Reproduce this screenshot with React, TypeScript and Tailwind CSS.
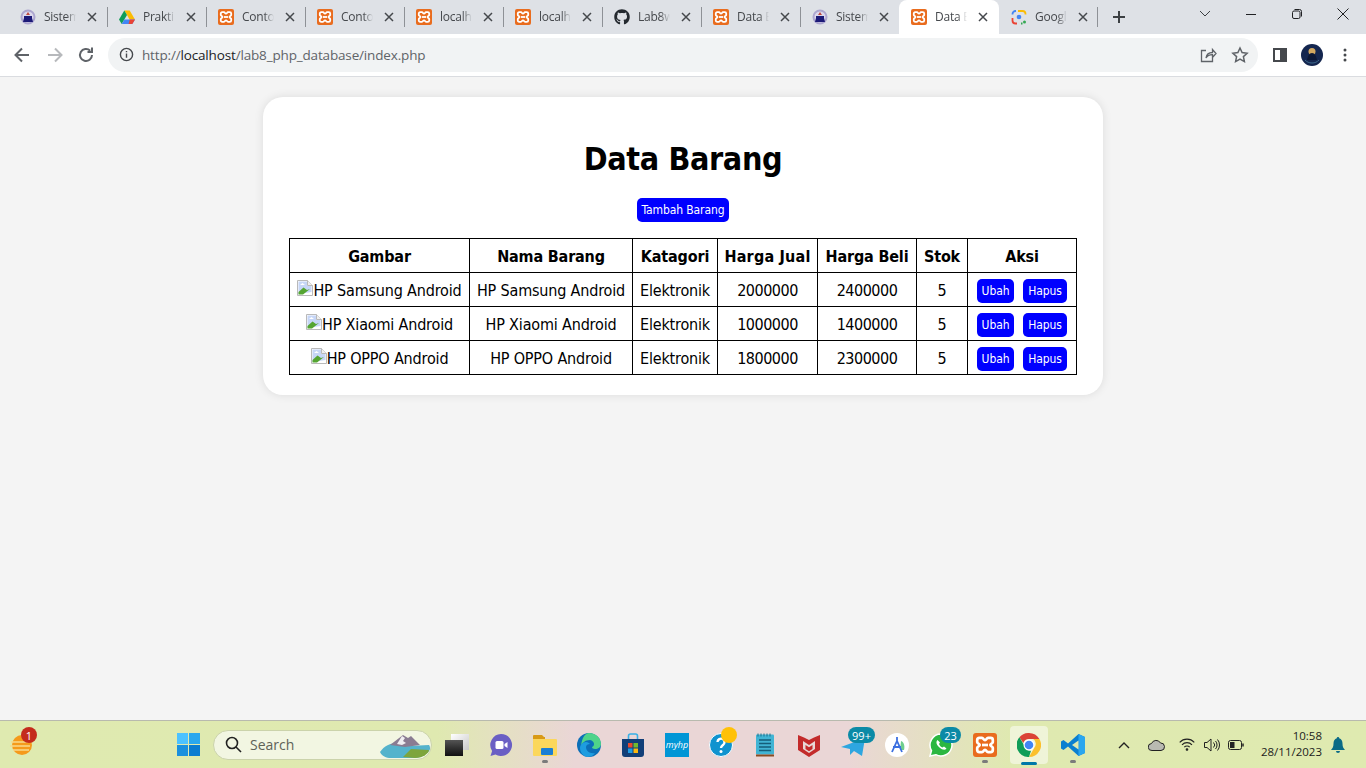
import React from "react";
import { FaGithub } from "react-icons/fa";

const Xampp = ({ s = 16 }: { s?: number }) => (
  <svg width={s} height={s} viewBox="0 0 16 16" className="shrink-0">
    <rect width="16" height="16" rx="2" fill="#e96c1e" />
    <path d="M4.200 3.200h1.800c1 0 1 1.500 2 1.500s1-1.500 2-1.500h1.800c.9 0 1.400.7 1.400 1.400v1.500c0 .9-1.700 1-1.700 1.900s1.700 1 1.700 1.900v1.500c0 .7-.5 1.400-1.400 1.400H10c-1 0-1-1.500-2-1.500s-1 1.500-2 1.500H4.200c-.9 0-1.400-.7-1.400-1.400V9.900c0-.9 1.700-1 1.700-1.900s-1.700-1-1.700-1.900V4.600c0-.7.5-1.400 1.400-1.400z" fill="none" stroke="#fff" strokeWidth="1.800" />
    <path d="M6 8h4" stroke="#fff" strokeWidth="1.800" />
  </svg>
);

const Emblem = () => (
  <svg width="16" height="16" viewBox="0 0 16 16" className="shrink-0">
    <circle cx="8" cy="8" r="7.500" fill="#aca6cf" />
    <circle cx="8" cy="8" r="5.500" fill="#dcd8ec" />
    <path d="M8 3l2 3H6z" fill="#c0493f" />
    <path d="M4 7h8v2l1 4H3l1-4z" fill="#1c1a78" />
  </svg>
);

const Drive = () => (
  <svg width="16" height="16" viewBox="0 0 16 16" className="shrink-0">
    <path d="M5.300 1.500h5.400L16 10.500h-5.400z" fill="#fbbc04" />
    <path d="M5.300 1.500L0 10.500l2.700 4.500L8 6z" fill="#0f9d58" />
    <path d="M2.700 15h10.600L16 10.500H5.400z" fill="#4285f4" />
    <path d="M13.300 15L16 10.500h-5.200l-1.300 4.500z" fill="#ea4335" />
  </svg>
);

const Lens = () => (
  <svg width="16" height="16" viewBox="0 0 16 16" className="shrink-0" fill="none" strokeWidth="1.800">
    <path d="M5 2H4.500A3 3 0 0 0 1.500 5v.5" stroke="#4285f4" />
    <path d="M1.500 9v2.500a3 3 0 0 0 3 3H6" stroke="#ea4335" />
    <path d="M10 14.500h1.500" stroke="#34a853" />
    <path d="M7 2h4.500a3 3 0 0 1 3 3v.5" stroke="#fbbc04" />
    <circle cx="8" cy="8" r="2.300" fill="#4285f4" stroke="none" />
    <circle cx="13.500" cy="13" r="1.500" fill="#34a853" stroke="none" />
  </svg>
);

const tabs: { icon: React.ReactNode; title: string; active?: boolean }[] = [
  { icon: <Emblem />, title: "Sistem" },
  { icon: <Drive />, title: "Praktikum" },
  { icon: <Xampp />, title: "Contoh" },
  { icon: <Xampp />, title: "Contoh" },
  { icon: <Xampp />, title: "localhost" },
  { icon: <Xampp />, title: "localhost" },
  { icon: <FaGithub className="shrink-0 text-[16px] text-[#24292f]" />, title: "Lab8web" },
  { icon: <Xampp />, title: "Data Barang" },
  { icon: <Emblem />, title: "Sistem" },
  { icon: <Xampp />, title: "Data Barang", active: true },
  { icon: <Lens />, title: "Google" },
];

const Tab = ({ icon, title, active, sep, last }: { icon: React.ReactNode; title: string; active?: boolean; sep: boolean; last: boolean }) => (
  <div className={active ? "relative flex h-[34px] w-[100px] shrink-0 items-center rounded-t-[8px] bg-white pl-[12px]" : last ? "relative flex h-[34px] w-[98px] shrink-0 items-center pl-[12px]" : "relative flex h-[34px] w-[99px] shrink-0 items-center pl-[12px]"}>
    {icon}
    <span className="ml-[8px] w-[32px] overflow-hidden whitespace-nowrap text-[12px] tracking-[-0.25px] text-[#45484c] [mask-image:linear-gradient(to_right,black_70%,transparent)]">
      {title}
    </span>
    <svg width="10" height="10" viewBox="0 0 10 10" className="ml-[11px] shrink-0" stroke="#45484c" strokeWidth="1.500">
      <path d="M1 1l8 8M9 1l-8 8" />
    </svg>
    {sep && <div className="absolute right-[-1px] top-[7px] h-[20px] w-px bg-[#8e9196]" />}
  </div>
);

const ToolBtn = ({ d, c = "#5f6368" }: { d: string; c?: string }) => (
  <svg viewBox="0 0 20 20" className="h-[20px] w-[20px]" fill="none" stroke={c} strokeWidth="2">
    <path d={d} />
  </svg>
);

const rows = [
  ["HP Samsung Android", "2000000", "2400000"],
  ["HP Xiaomi Android", "1000000", "1400000"],
  ["HP OPPO Android", "1800000", "2300000"],
];

const Broken = () => (
  <svg width="16" height="16" viewBox="0 0 16 16" className="inline-block align-[0px]">
    <path d="M.5.500h10l5 5v10H.5z" fill="#fff" stroke="#b9b9b9" />
    <path d="M1.500 1.500h8.500v4.500h4.500v6L1.500 14z" fill="#c6d6f7" />
    <path d="M1.500 14.500V12L6.500 7.500l3.500 2.500 3-1-7 5.500z" fill="#55a532" />
    <path d="M3 5l2.500-2 2.500 2z" fill="#fff" />
    <path d="M10.500.500v5h5" fill="#efefef" stroke="#b9b9b9" />
  </svg>
);

const Btn = ({ children, w }: { children: string; w: string }) => (
  <span className={`inline-flex h-[24px] ${w} items-center justify-center rounded-[5px] bg-[#0000ff] text-[12px] leading-none tracking-[-0.1px] text-white`}>{children}</span>
);

const Slot = ({ children, dot }: { children: React.ReactNode; dot?: boolean }) => (
  <div className="relative flex h-[47px] w-[44px] shrink-0 items-center justify-center">
    {children}
    {dot && <div className="absolute bottom-[5px] left-[19px] h-[3px] w-[6px] rounded-full bg-[#7b7b7b]" />}
  </div>
);

const Pill = ({ children, cls }: { children: string; cls: string }) => (
  <div className={`absolute flex h-[16px] items-center justify-center rounded-full bg-[#0b8aa6] text-[11px] leading-none text-white ${cls}`}>{children}</div>
);

const td = "border border-black p-0 pt-[2px]";

export default function App() {
  return (
    <div className="flex h-screen w-full flex-col overflow-hidden bg-[#f4f4f4] font-['Open_Sans',sans-serif]">
      {/* tab strip */}
      <div className="flex h-[34px] shrink-0 items-center bg-[#dee1e6] pl-[8px]">
        {tabs.map((t, i) => (
          <Tab key={i} icon={t.icon} title={t.title} active={t.active} last={i === 10} sep={!t.active && i !== 8} />
        ))}
        <svg width="14" height="14" viewBox="0 0 14 14" className="ml-[15px] shrink-0" stroke="#3c4043" strokeWidth="2">
          <path d="M7 1v12M1 7h12" />
        </svg>
        <svg width="12" height="8" viewBox="0 0 12 8" className="ml-[73px] mb-[6px] shrink-0" fill="none" stroke="#3c4043" strokeWidth="1">
          <path d="M1 1l5 5 5-5" />
        </svg>
        <svg width="12" height="12" viewBox="0 0 12 12" className="ml-[34px] mb-[6px] shrink-0" stroke="#202124" strokeWidth="1">
          <path d="M1 6.500h10" />
        </svg>
        <svg width="12" height="12" viewBox="0 0 12 12" className="ml-[34px] mb-[6px] shrink-0" fill="none" stroke="#202124" strokeWidth="1">
          <rect x="1.500" y="3" width="7.500" height="7.500" rx="1.500" />
          <path d="M3.500 1.500h5a2 2 0 0 1 2 2v5" />
        </svg>
        <svg width="14" height="14" viewBox="0 0 14 14" className="ml-[33px] mb-[6px] shrink-0" stroke="#202124" strokeWidth="1">
          <path d="M1.500 1.500l11 11M12.500 1.500l-11 11" />
        </svg>
      </div>

      {/* toolbar */}
      <div className="flex h-[43px] shrink-0 items-center border-b border-[#dadce0] bg-white pb-px pl-[12px]">
        <ToolBtn d="M17 10H4M10 3.500L3.500 10l6.500 6.500" />
        <div className="ml-[13px]"><ToolBtn d="M3 10h13M10 3.500l6.500 6.500-6.500 6.500" c="#b7b9bc" /></div>
        <div className="ml-[11px]"><ToolBtn d="M16 10a6 6 0 1 1-1.800-4.300M16 2.500v4.500h-4.500" c="#5f6368" /></div>
        <div className="ml-[12px] flex h-[34px] w-[1150px] shrink-0 items-center rounded-full bg-[#f1f3f4] pl-[11px]">
          <svg width="15" height="15" viewBox="0 0 16 16" fill="none" stroke="#45484c" strokeWidth="1.500" className="shrink-0">
            <circle cx="8" cy="8" r="6.500" />
            <path d="M8 7v4.500M8 4.200v1.500" />
          </svg>
          <span className="ml-[8px] mt-px whitespace-nowrap text-[13.500px] tracking-[-0.16px] text-[#5f6368]">
            http://<span className="text-[#202124]">localhost</span>/lab8_php_database/index.php
          </span>
          <svg width="18" height="18" viewBox="0 0 18 18" fill="none" stroke="#5f6368" strokeWidth="1.300" className="ml-auto shrink-0">
            <path d="M7 4.500H2.500v11h11V11M7 12c.5-3.500 3-5.500 6.500-5.500V3.500L17 7.500l-3.500 4V8.600c-3-.1-5 .9-6.500 3.400z" />
          </svg>
          <svg width="18" height="18" viewBox="0 0 18 18" fill="none" stroke="#5f6368" strokeWidth="1.500" className="ml-[14px] mr-[9px] shrink-0">
            <path d="M9 2l2.100 4.600 5 .6-3.700 3.400 1 5L9 13.100l-4.400 2.500 1-5L1.900 7.200l5-.6z" />
          </svg>
        </div>
        <div className="ml-[15px] flex h-[14px] w-[14px] shrink-0 justify-end border-2 border-[#45484c] bg-white">
          <div className="h-full w-[5px] bg-[#45484c]" />
        </div>
        <svg width="22" height="22" viewBox="0 0 22 22" className="ml-[14px] shrink-0">
          <circle cx="11" cy="11" r="11" fill="#14264f" />
          <circle cx="11" cy="7.500" r="3.500" fill="#d2a860" />
          <path d="M11 9c-3 0-4 3-5 7h10c-1-4-2-7-5-7z" fill="#0c1836" />
          <path d="M4 16c2 2 4 3 7 3s5-1 7-3" fill="none" stroke="#3d6a8e" />
        </svg>
        <svg width="4" height="14" viewBox="0 0 4 14" className="ml-[20px] shrink-0" fill="#45484c">
          <circle cx="2" cy="2" r="1.500" /><circle cx="2" cy="7" r="1.500" /><circle cx="2" cy="12" r="1.500" />
        </svg>
      </div>

      {/* page */}
      <div className="min-h-0 flex-1 pt-[20px] font-['DejaVu_Sans_Condensed','DejaVu_Sans',sans-serif]">
        <div className="mx-auto w-[840px] rounded-[20px] bg-white px-[26px] pb-[20px] pt-[43px] shadow-[0_0_10px_rgba(0,0,0,0.1)]">
          <h1 className="h-[39px] text-center text-[32px] font-bold leading-[39px] tracking-[-0.36px] text-black">Data Barang</h1>
          <div className="mt-[19px] flex justify-center">
            <Btn w="w-[92px]">Tambah Barang</Btn>
          </div>
          <table className="mt-[16px] w-[787px] table-fixed border-collapse text-center text-[16px] tracking-[-0.17px] text-black">
            <colgroup>
              <col className="w-[180px]" />
              <col className="w-[163px]" />
              <col className="w-[85px]" />
              <col className="w-[100px]" />
              <col className="w-[99px]" />
              <col className="w-[51px]" />
              <col className="w-[109px]" />
            </colgroup>
            <thead>
              <tr className="h-[34px]">
                {["Gambar", "Nama Barang", "Katagori", "Harga Jual", "Harga Beli", "Stok", "Aksi"].map((h) => (
                  <th key={h} className={h === "Harga Jual" ? "border border-black p-0 pt-[2px] font-bold tracking-[0.2px]" : "border border-black p-0 pt-[2px] font-bold"}>{h}</th>
                ))}
              </tr>
            </thead>
            <tbody>
              {rows.map((r) => (
                <tr key={r[0]} className="h-[34px]">
                  <td className={`whitespace-nowrap ${td}`}><Broken />{r[0]}</td>
                  <td className={`whitespace-nowrap ${td}`}>{r[0]}</td>
                  <td className={td}>Elektronik</td>
                  <td className={`${td} tracking-[-0.5px]`}>{r[1]}</td>
                  <td className={`${td} tracking-[-0.5px]`}>{r[2]}</td>
                  <td className={td}>5</td>
                  <td className={td}>
                    <div className="flex justify-center gap-[9px] pt-px">
                      <Btn w="w-[37px]">Ubah</Btn>
                      <Btn w="w-[44px]">Hapus</Btn>
                    </div>
                  </td>
                </tr>
              ))}
            </tbody>
          </table>
        </div>
      </div>

      {/* taskbar */}
      <div className="flex h-[48px] shrink-0 items-center border-t border-[#b8baae] bg-[linear-gradient(to_right,#dfeab0_0%,#dfe9b0_32%,#ead6d6_42%,#ead6d6_62%,#dfe9b0_74%,#dfeab0_100%)] font-['Open_Sans',sans-serif]">
        {/* weather */}
        <div className="relative flex h-[47px] w-[44px] shrink-0 items-center justify-center">
          <svg width="24" height="24" viewBox="0 0 24 24">
            <circle cx="12" cy="12" r="10" fill="#f59a1b" />
            <path d="M1 9h18M0 13h20M3 17h16" stroke="#f8d98c" strokeWidth="1.500" />
          </svg>
          <div className="absolute left-[21px] top-[6px] flex h-[16px] w-[16px] items-center justify-center rounded-full bg-[#c42b1c] text-[11px] leading-none text-white">1</div>
        </div>
        {/* start */}
        <div className="ml-[122px] flex h-[47px] w-[44px] shrink-0 items-center justify-center">
          <div className="grid h-[23px] w-[23px] grid-cols-2 gap-px">
            <div className="bg-[#4cc2ff]" /><div className="bg-[#2aa8ee]" />
            <div className="bg-[#1a90de]" /><div className="bg-[#0b7cd0]" />
          </div>
        </div>
        {/* search */}
        <div className="ml-[3px] flex h-[30px] w-[219px] shrink-0 items-center rounded-full border border-[#cbd3ab] bg-[#f2f6e2] pl-[11px]">
          <svg width="17" height="17" viewBox="0 0 17 17" fill="none" stroke="#222" strokeWidth="1.600" className="shrink-0">
            <circle cx="7" cy="7" r="5.500" /><path d="M11 11l5 5" />
          </svg>
          <span className="mb-px ml-[8px] text-[14px] text-[#5e6257]">Search</span>
          <svg width="52" height="26" viewBox="0 0 52 26" className="ml-auto shrink-0">
            <path d="M1 20c4-6 10-9 18-9l11 3 20-1c2 3 1 6-2 8-3 3-8 5-14 5H12C7 26 3 24 1 20z" fill="#54b3cc" />
            <path d="M11 13L24 3l5 3 3-2 9 9-15 2z" fill="#8a7c92" />
            <path d="M23 4l3 2-2 3 3 2-4 2-5-1z" fill="#f0eef2" />
            <path d="M24 25l8-8 18 1c0 3-6 8-14 8z" fill="#7da53d" />
          </svg>
        </div>
        {/* pinned */}
        <div className="ml-[3px] flex">
          <Slot>
            <div className="relative h-[22px] w-[24px]">
              <div className="absolute right-0 top-0 h-[16px] w-[18px] bg-gradient-to-br from-white to-[#c9c9c9]" />
              <div className="absolute bottom-0 left-0 h-[16px] w-[18px] bg-gradient-to-b from-[#555] to-[#111]" />
            </div>
          </Slot>
          <Slot>
            <svg width="24" height="24" viewBox="0 0 24 24">
              <path d="M12 1a11 11 0 1 1-5.500 20.500L1.500 23l1.600-5A11 11 0 0 1 12 1z" fill="#6a5fc4" />
              <rect x="6.500" y="8" width="8" height="8" rx="1.500" fill="#fff" />
              <path d="M15.500 11l3-2v6l-3-2z" fill="#fff" />
            </svg>
          </Slot>
          <Slot dot>
            <svg width="24" height="24" viewBox="0 0 24 24">
              <path d="M0 3a1 1 0 0 1 1-1h8l2 2h1v6H0z" fill="#d89a16" />
              <path d="M0 6h23a1 1 0 0 1 1 1v15a1 1 0 0 1-1 1H1a1 1 0 0 1-1-1z" fill="#fbd75c" />
              <rect x="8" y="15" width="12" height="7" rx="1" fill="#1b7fd4" />
            </svg>
          </Slot>
          <Slot>
            <svg width="24" height="24" viewBox="0 0 24 24">
              <circle cx="12" cy="12" r="12" fill="#0c6fb8" />
              <path d="M12 0c7 0 12 5 12 11 0 3-3 5-6 5-2 0-3-1-3-2 3-1 3-6-2-7-5 0-8 3-9 6C5 5 8 0 12 0z" fill="#4fd38a" />
              <path d="M9 14c0 4 4 7 9 6-2 3-5 4-8 4-4-1-7-5-7-9 0-3 3-6 6-6 2 0 3 1 4 2-2 0-4 1-4 3z" fill="#1e9de0" />
            </svg>
          </Slot>
          <Slot>
            <svg width="24" height="24" viewBox="0 0 24 24">
              <path d="M1 6h22v15a3 3 0 0 1-3 3H4a3 3 0 0 1-3-3z" fill="#123f78" />
              <path d="M7.500 6V3a2 2 0 0 1 2-2h5a2 2 0 0 1 2 2v3" fill="none" stroke="#39b0e6" strokeWidth="1.600" />
              <rect x="7" y="10" width="4.500" height="4.500" fill="#e8492f" />
              <rect x="12.500" y="10" width="4.500" height="4.500" fill="#71b92e" />
              <rect x="7" y="15.500" width="4.500" height="4.500" fill="#1d9de6" />
              <rect x="12.500" y="15.500" width="4.500" height="4.500" fill="#fbb80f" />
            </svg>
          </Slot>
          <Slot>
            <div className="flex h-[24px] w-[24px] items-center justify-center bg-[#0096d6] text-[9px] italic leading-none text-white">myhp</div>
          </Slot>
          <Slot>
            <svg width="24" height="24" viewBox="0 0 24 24">
              <circle cx="12" cy="12" r="11.500" fill="#0f93cf" stroke="#fff" />
              <path d="M8.500 9a3.500 3.500 0 1 1 5.500 3c-1.300 1-2 1.500-2 3" fill="none" stroke="#fff" strokeWidth="2.400" />
              <circle cx="12" cy="18.500" r="1.500" fill="#fff" />
            </svg>
            <div className="absolute left-[22px] top-[6px] h-[16px] w-[16px] rounded-full bg-[#ffc107]" />
          </Slot>
          <Slot>
            <svg width="18" height="24" viewBox="0 0 18 24">
              <rect y="1.500" width="18" height="20" rx="1" fill="#41b4d4" />
              <rect y="21.500" width="18" height="2" fill="#8a4b22" />
              <path d="M2 .5v3M5 .5v3M8 .5v3M11 .5v3M14 .5v3" stroke="#1a6f8b" />
              <path d="M3 7h12M3 10.500h12M3 14h12M3 17.500h12" stroke="#155e7a" strokeWidth="1.500" />
            </svg>
          </Slot>
          <Slot>
            <svg width="22" height="24" viewBox="0 0 22 24">
              <path d="M0 2l6 2.500L11 7l5-2.500L22 2v15l-11 7L0 17z" fill="#c32b2b" />
              <path d="M5 8l6 4 6-4v8l-6 4-6-4z" fill="#e8d8d6" />
              <path d="M7.500 12l3.500 2.300 3.500-2.300v4L11 18.300 7.500 16z" fill="#c32b2b" />
            </svg>
          </Slot>
          <Slot>
            <svg width="24" height="24" viewBox="0 0 24 24" className="mt-[3px]">
              <path d="M0 13L24 4l-3 18-8-5-4 4v-6z" fill="#2ea6e0" />
            </svg>
            <Pill cls="left-[17px] top-[6px] w-[27px]">99+</Pill>
          </Slot>
          <Slot>
            <svg width="24" height="24" viewBox="0 0 24 24">
              <circle cx="12" cy="12" r="12" fill="#fff" />
              <path d="M16 8c3 1 4 5 3 9h-4z" fill="#6fce8d" />
              <path d="M12 4v4M7 19l5-11 5 11M8 14h8" fill="none" stroke="#3c6fe0" strokeWidth="1.800" />
            </svg>
          </Slot>
          <Slot>
            <svg width="24" height="24" viewBox="0 0 24 24">
              <path d="M12 1a11 11 0 1 1-5.200 20.700L1 23l1.500-5.500A11 11 0 0 1 12 1z" fill="#2bb741" stroke="#fff" strokeWidth="1.500" />
              <path d="M8.500 7c-2 2-1 5 2 7.500s5.500 3 7 1l-2.500-2-1.500 1c-1.500-.5-3-2-3.500-3.500l1-1.500z" fill="#fff" />
            </svg>
            <Pill cls="left-[21px] top-[6px] w-[21px]">23</Pill>
          </Slot>
          <Slot dot>
            <Xampp s={24} />
          </Slot>
          <div className="relative flex h-[47px] w-[44px] shrink-0 items-center justify-center">
            <div className="absolute left-[3px] top-[5px] h-[38px] w-[38px] rounded-[4px] bg-white/50" />
            <svg width="24" height="24" viewBox="0 0 24 24" className="relative">
              <path d="M12 0a12 12 0 0 1 10.400 6H12a6 6 0 0 0-5.700 4L2.400 4.300A12 12 0 0 1 12 0z" fill="#db4437" />
              <path d="M22.400 6A12 12 0 0 1 12 24l5.200-9a6 6 0 0 0-1-9z" fill="#fbc02d" />
              <path d="M12 24A12 12 0 0 1 2.400 4.300L7.600 13a6 6 0 0 0 6.400 4.700z" fill="#0f9d58" />
              <circle cx="12" cy="12" r="5.500" fill="#fff" />
              <circle cx="12" cy="12" r="4.300" fill="#4285f4" />
            </svg>
            <div className="absolute bottom-[3px] left-[14px] h-[3px] w-[16px] rounded-full bg-[#0078a8]" />
          </div>
          <Slot dot>
            <svg width="24" height="24" viewBox="0 0 24 24">
              <path d="M17.500 1L24 4v16l-6.500 3L7 13.500 2.500 17 0 15.500V8.500L2.500 7 7 10.500z" fill="#0a7fd0" />
              <path d="M17.500 1L24 4v16l-6.500 3z" fill="#2aa6ef" />
              <path d="M17.500 7.500L11 12l6.500 4.500z" fill="#dfe9b0" />
            </svg>
          </Slot>
        </div>
        {/* tray */}
        <svg width="12" height="8" viewBox="0 0 12 8" className="ml-[23px] shrink-0" fill="none" stroke="#222" strokeWidth="1.400">
          <path d="M1 7l5-5 5 5" />
        </svg>
        <svg width="17" height="12" viewBox="0 0 17 12" className="ml-[18px] shrink-0">
          <path d="M4 11.500a3.500 3.500 0 0 1-.5-7A5 5 0 0 1 12.500 4a3.700 3.700 0 0 1 .5 7.500z" fill="#b9bab2" stroke="#222" />
        </svg>
        <svg width="16" height="13" viewBox="0 0 16 13" className="ml-[14px] shrink-0" fill="none" stroke="#222" strokeWidth="1.100">
          <path d="M.7 4.300a10 10 0 0 1 14.600 0M3 6.800a6.800 6.800 0 0 1 10 0M5.300 9.200a3.600 3.600 0 0 1 5.400 0" />
          <circle cx="8" cy="11.500" r=".8" fill="#222" />
        </svg>
        <svg width="16" height="14" viewBox="0 0 16 14" className="ml-[9px] shrink-0" fill="none" stroke="#222" strokeWidth="1">
          <path d="M.5 4.500h2.500L7 1v12L3 9.500H.5zM9.500 4.500a3.500 3.500 0 0 1 0 5M11.500 3a6 6 0 0 1 0 8M13.500 1.500a8.500 8.500 0 0 1 0 11" />
        </svg>
        <svg width="16" height="10" viewBox="0 0 16 10" className="ml-[8px] shrink-0" fill="none" stroke="#222">
          <rect x=".5" y=".5" width="13" height="9" rx="2" />
          <rect x="2" y="2" width="4.500" height="6" fill="#222" stroke="none" />
          <path d="M15 3.500v3" strokeWidth="1.500" />
        </svg>
        <div className="mb-[2px] ml-[16px] flex w-[62px] shrink-0 flex-col items-end text-[11.500px] leading-[16px] text-[#1c1c1c]">
          <span className="whitespace-nowrap">10:58</span>
          <span className="whitespace-nowrap">28/11/2023</span>
        </div>
        <svg width="14" height="16" viewBox="0 0 14 16" className="ml-[9px] shrink-0" fill="#0b6a86">
          <path d="M7 0a1.200 1.200 0 0 1 1.200 1.300C10.500 2 11.500 4 11.500 6.500c0 3 .7 4.500 2.500 6.500H0c1.800-2 2.500-3.500 2.500-6.500C2.500 4 3.500 2 5.800 1.300A1.200 1.200 0 0 1 7 0zM5 14h4a2 2 0 0 1-4 0z" />
        </svg>
      </div>
    </div>
  );
}
